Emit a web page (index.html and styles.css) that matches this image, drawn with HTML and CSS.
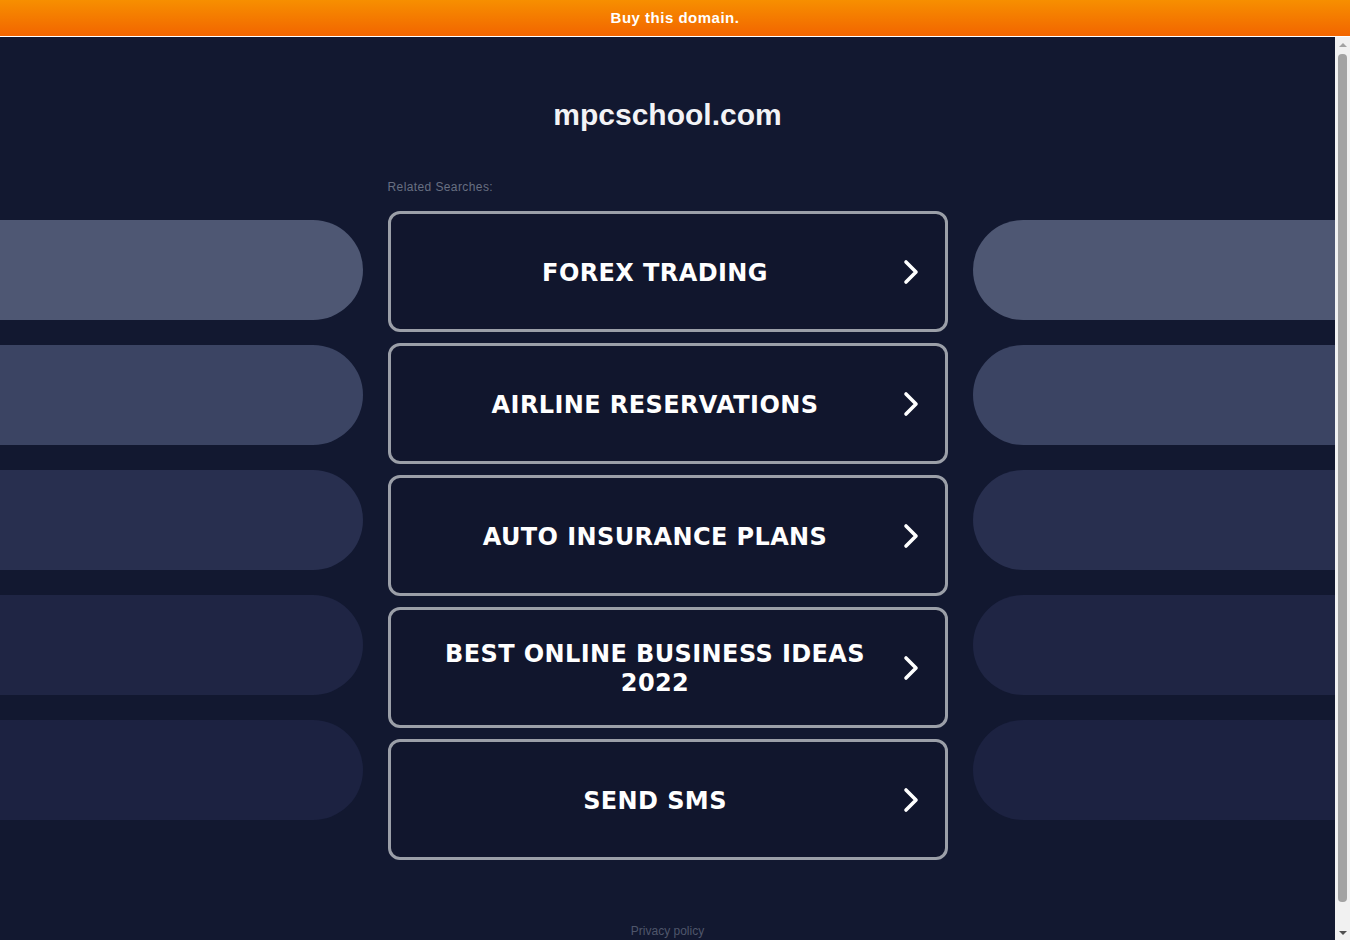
FILE: index.html
```html
<!DOCTYPE html>
<html lang="en">
<head>
    <meta charset="UTF-8">
    <meta name="viewport" content="width=device-width, initial-scale=1.0">
    <title>mpcschool.com</title>
    <link rel="stylesheet" href="styles.css">
</head>
<body>
    <div class="buy-bar">Buy this domain.</div>

    <div class="viewport">
        <div class="frame">
            <div class="page">
                <h1 class="domain">mpcschool.com</h1>

                <div class="layout">
                    <div class="pills pills-left">
                        <div class="pill p1"></div>
                        <div class="pill p2"></div>
                        <div class="pill p3"></div>
                        <div class="pill p4"></div>
                        <div class="pill p5"></div>
                    </div>

                    <div class="searches">
                        <p class="related">Related Searches:</p>
                        <a class="search-link" href="#">
                            <span class="label">FOREX TRADING</span>
                            <svg class="chevron" viewBox="0 0 16 26"><path d="M3 3 L13 13 L3 23"/></svg>
                        </a>
                        <a class="search-link" href="#">
                            <span class="label">AIRLINE RESERVATIONS</span>
                            <svg class="chevron" viewBox="0 0 16 26"><path d="M3 3 L13 13 L3 23"/></svg>
                        </a>
                        <a class="search-link" href="#">
                            <span class="label">AUTO INSURANCE PLANS</span>
                            <svg class="chevron" viewBox="0 0 16 26"><path d="M3 3 L13 13 L3 23"/></svg>
                        </a>
                        <a class="search-link" href="#">
                            <span class="label">BEST ONLINE BUSINESS IDEAS 2022</span>
                            <svg class="chevron" viewBox="0 0 16 26"><path d="M3 3 L13 13 L3 23"/></svg>
                        </a>
                        <a class="search-link" href="#">
                            <span class="label">SEND SMS</span>
                            <svg class="chevron" viewBox="0 0 16 26"><path d="M3 3 L13 13 L3 23"/></svg>
                        </a>
                    </div>

                    <div class="pills pills-right">
                        <div class="pill p1"></div>
                        <div class="pill p2"></div>
                        <div class="pill p3"></div>
                        <div class="pill p4"></div>
                        <div class="pill p5"></div>
                    </div>
                </div>

                <div class="footer"><a href="#">Privacy policy</a></div>
            </div>
        </div>

        <!-- frame scrollbar -->
        <div class="scrollbar">
            <div class="sb-btn"><span class="arrow-up"></span></div>
            <div class="sb-track"><div class="sb-thumb"></div></div>
            <div class="sb-btn"><span class="arrow-down"></span></div>
        </div>
    </div>
</body>
</html>
```

FILE: styles.css
```css
body {
    margin: 0;
    padding: 0;
    height: 100vh;
    overflow: hidden;
    font-family: "Liberation Sans", Arial, sans-serif;
    background: #ffffff;
}
.buy-bar {
    height: 36px;
    line-height: 35px;
    border-bottom: 1px solid #ffffff;
    background: linear-gradient(to bottom, #f78f00, #f26500);
    color: #ffffff;
    font-size: 15px;
    font-weight: bold;
    letter-spacing: 0.5px;
    text-align: center;
}
.viewport {
    display: flex;
    height: 903px;
}
.frame {
    flex: 1;
    overflow: hidden;
    background: #121830;
}
.page {
    padding: 60px 0 33px;
}
.domain {
    margin: 0 0 46px;
    font-size: 30px;
    line-height: 36px;
    font-weight: bold;
    color: #f2f3f6;
    text-align: center;
}
.layout {
    display: grid;
    grid-template-columns: 1fr 560px 1fr;
    column-gap: 25px;
}
.pills {
    display: flex;
    flex-direction: column;
    gap: 25px;
    padding-top: 41px;
}
.pill {
    height: 100px;
}
.pills-left .pill {
    border-radius: 0 50px 50px 0;
}
.pills-right .pill {
    border-radius: 50px 0 0 50px;
}
.p1 { background: #4e5773; }
.p2 { background: #3b4463; }
.p3 { background: #282f4f; }
.p4 { background: #1f2544; }
.p5 { background: #1c2241; }
.related {
    margin: 0 0 5px;
    font-size: 12px;
    line-height: 16px;
    letter-spacing: 0.4px;
    color: #686f82;
}
.searches {
    display: flex;
    flex-direction: column;
    gap: 11px;
}
.search-link {
    display: flex;
    align-items: center;
    height: 121px;
    box-sizing: border-box;
    padding: 0 26px 0 29px;
    border: 3px solid #9b9fa8;
    border-radius: 12px;
    background: #11162d;
    color: #ffffff;
    text-decoration: none;
}
.label {
    flex: 1;
    padding-top: 3px;
    text-align: center;
    font-family: "DejaVu Sans", Verdana, sans-serif;
    font-weight: bold;
    font-size: 24px;
    line-height: 29px;
    letter-spacing: 0.4px;
}
.chevron {
    width: 16px;
    height: 26px;
    margin-left: 12px;
    fill: none;
    stroke: #ffffff;
    stroke-width: 3.6;
    stroke-linecap: round;
    stroke-linejoin: round;
}
.footer {
    margin-top: 64px;
    text-align: center;
    font-size: 12px;
    line-height: 14px;
}
.footer a {
    color: #4f566b;
    text-decoration: none;
}
.scrollbar {
    width: 15px;
    display: flex;
    flex-direction: column;
    background: #f1f1f1;
}
.sb-btn {
    height: 15px;
    display: flex;
    align-items: center;
    justify-content: center;
}
.arrow-up {
    border-left: 4px solid transparent;
    border-right: 4px solid transparent;
    border-bottom: 4px solid #a3a3a3;
}
.arrow-down {
    border-left: 4px solid transparent;
    border-right: 4px solid transparent;
    border-top: 4px solid #505050;
}
.sb-track {
    flex: 1;
    padding: 2px 3px 23px;
}
.sb-thumb {
    height: 100%;
    border-radius: 4px;
    background: #a3a3a3;
}
```
